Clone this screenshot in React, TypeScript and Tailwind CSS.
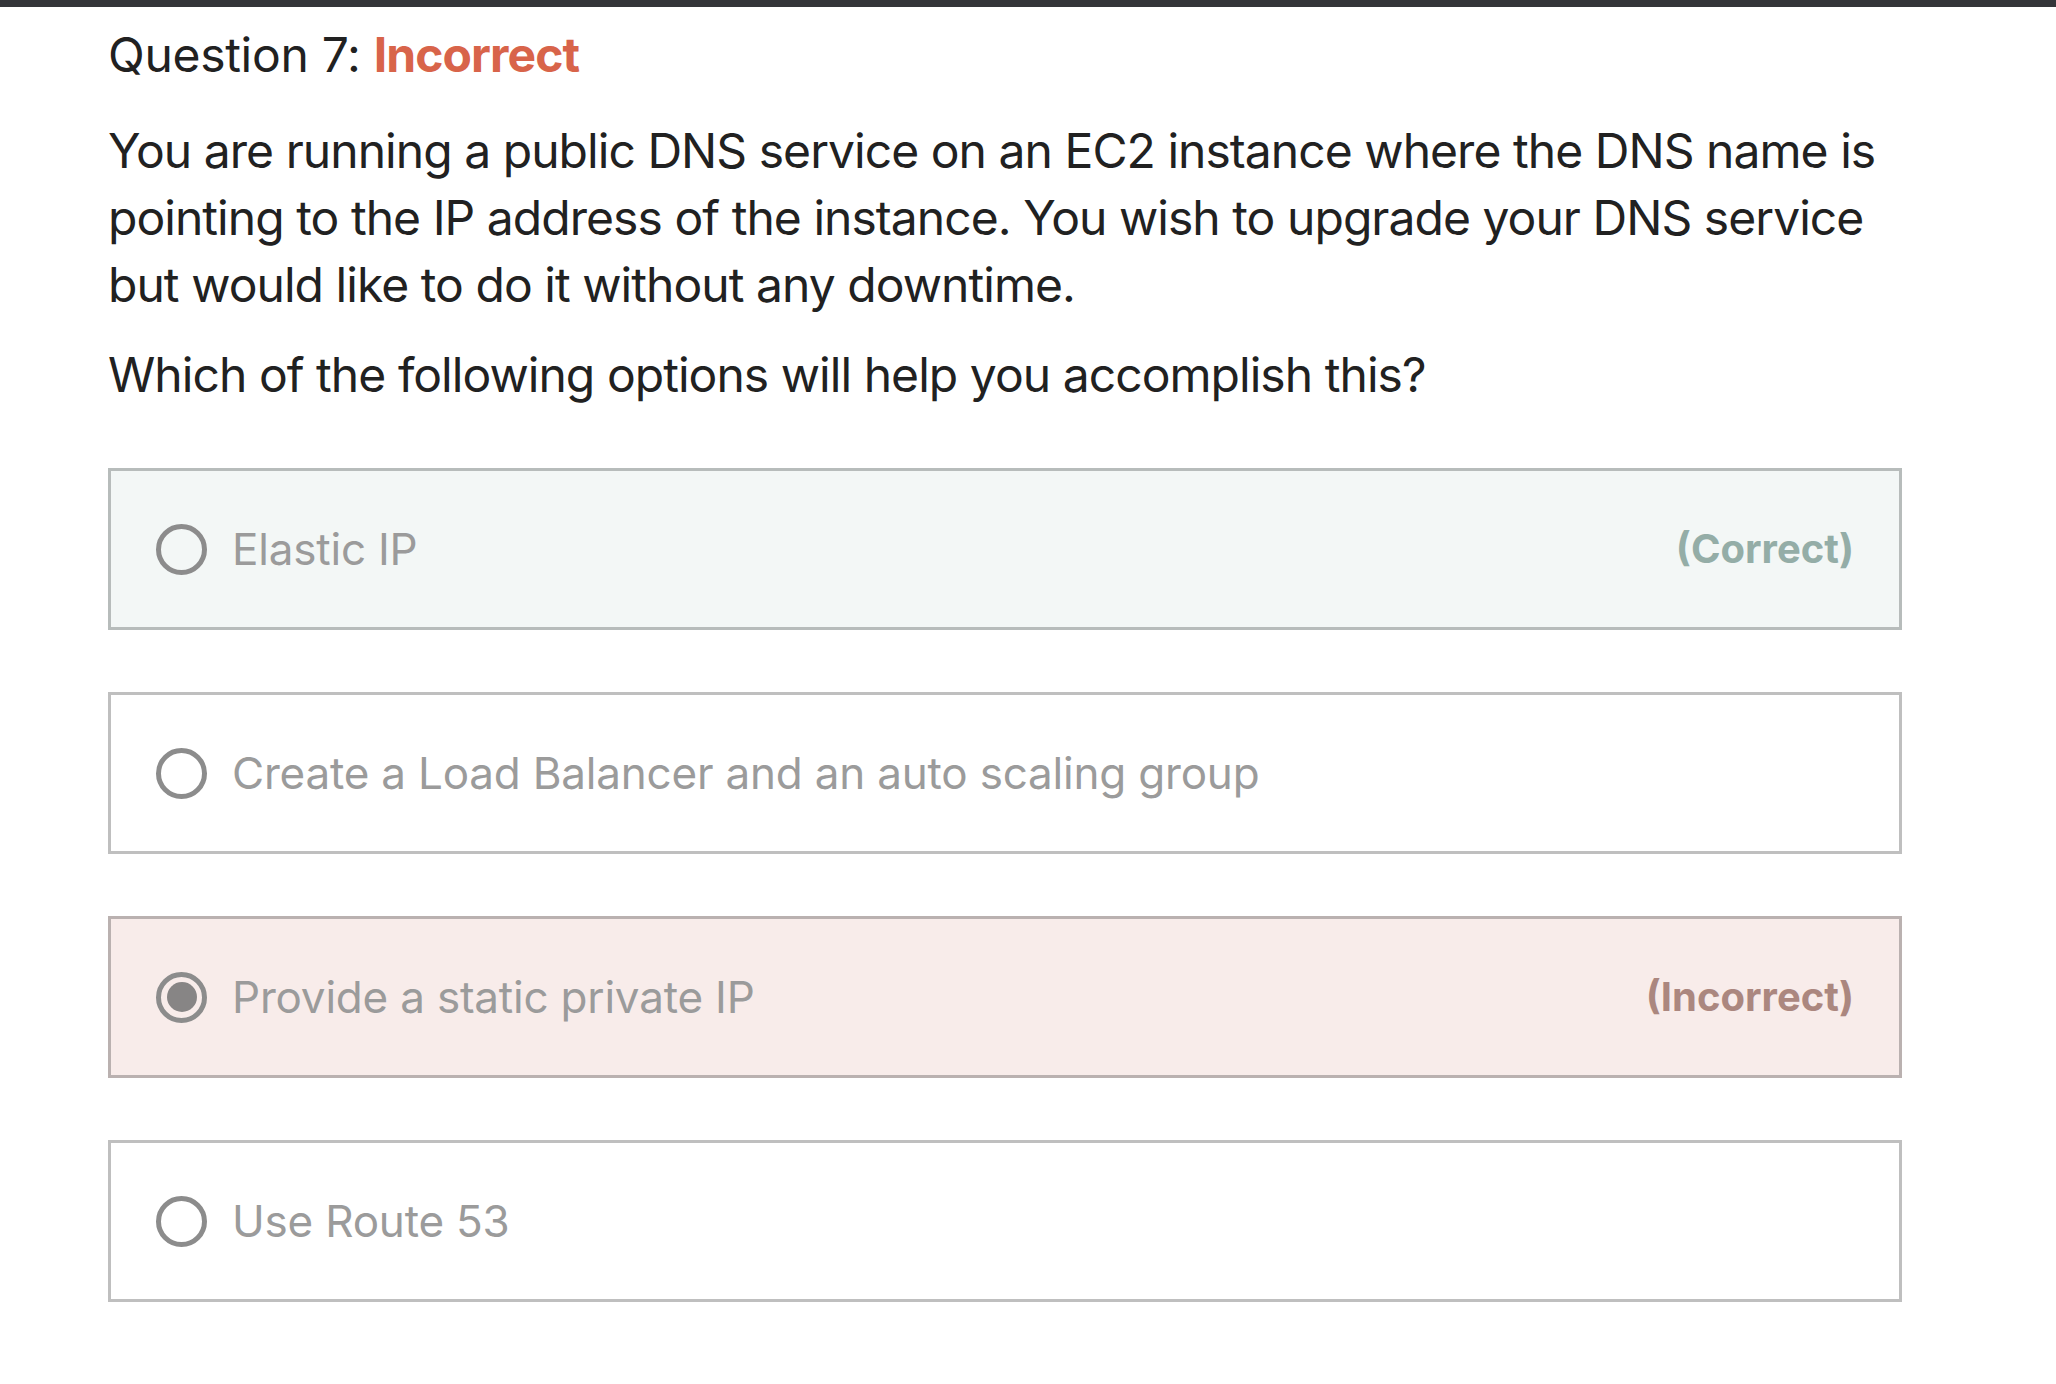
import {Fragment} from "react";

type Option = {
    label: string;
    selected?: boolean;
    result?: "correct" | "incorrect";
};

const options: Option[] = [
    {label: "Elastic IP", result: "correct"},
    {label: "Create a Load Balancer and an auto scaling group"},
    {label: "Provide a static private IP", selected: true, result: "incorrect"},
    {label: "Use Route 53"},
];

export default function App() {
    return (
        <div className="min-h-screen bg-white font-[Inter,'Noto_Sans',sans-serif] text-[#212121]">
            <div className="h-[7px] bg-[#343539]"/>

            <div className="w-[1902px] pl-[108px] pt-[14px]">
                <h1 className="text-[48px] leading-[67px] tracking-[-0.3px]">
                    Question 7:{" "}
                    <span className="font-bold tracking-[-0.9px] text-[#d8644a]">Incorrect</span>
                </h1>

                <p className="mt-[29px] text-[48px] leading-[67px] tracking-[-0.95px]">
                    You are running a public DNS service on an EC2 instance where the DNS name is
                    pointing to the IP address of the instance. You wish to upgrade your DNS service
                    but would like to do it without any downtime.
                </p>

                <p className="mt-[23px] text-[48px] leading-[67px] tracking-[-0.95px]">
                    Which of the following options will help you accomplish this?
                </p>

                <div className="mt-[60px] flex flex-col gap-[62px]">
                    {options.map((option) => (
                        <Fragment key={option.label}>
                            <OptionRow option={option}/>
                        </Fragment>
                    ))}
                </div>
            </div>
        </div>
    );
}

function OptionRow({option}: {option: Option}) {
    const boxClassName =
        option.result === "correct"
            ? "border-[#b7bcbb] bg-[#f3f7f6]"
            : option.result === "incorrect"
                ? "border-[#bab1b0] bg-[#f8ecea]"
                : "border-[#bfbfbf] bg-white";

    return (
        <div
            className={`flex h-[162px] items-center border-[3px] pl-[45px] pr-[45px] ${boxClassName}`}
        >
            <Radio selected={option.selected}/>

            <span className="ml-[25px] flex-1 text-[44px] tracking-[-0.2px] text-[#9b9b9b]">
                {option.label}
            </span>

            {option.result === "correct" ? (
                <span className="text-[40px] font-bold text-[#94ada7]">(Correct)</span>
            ) : null}

            {option.result === "incorrect" ? (
                <span className="text-[40px] font-bold text-[#ab877f]">(Incorrect)</span>
            ) : null}
        </div>
    );
}

function Radio({selected}: {selected?: boolean}) {
    return (
        <span className="flex size-[51px] shrink-0 items-center justify-center rounded-full border-[5px] border-[#8c8c8c]">
            {selected ? <span className="size-[30px] rounded-full bg-[#878585]"/> : null}
        </span>
    );
}
